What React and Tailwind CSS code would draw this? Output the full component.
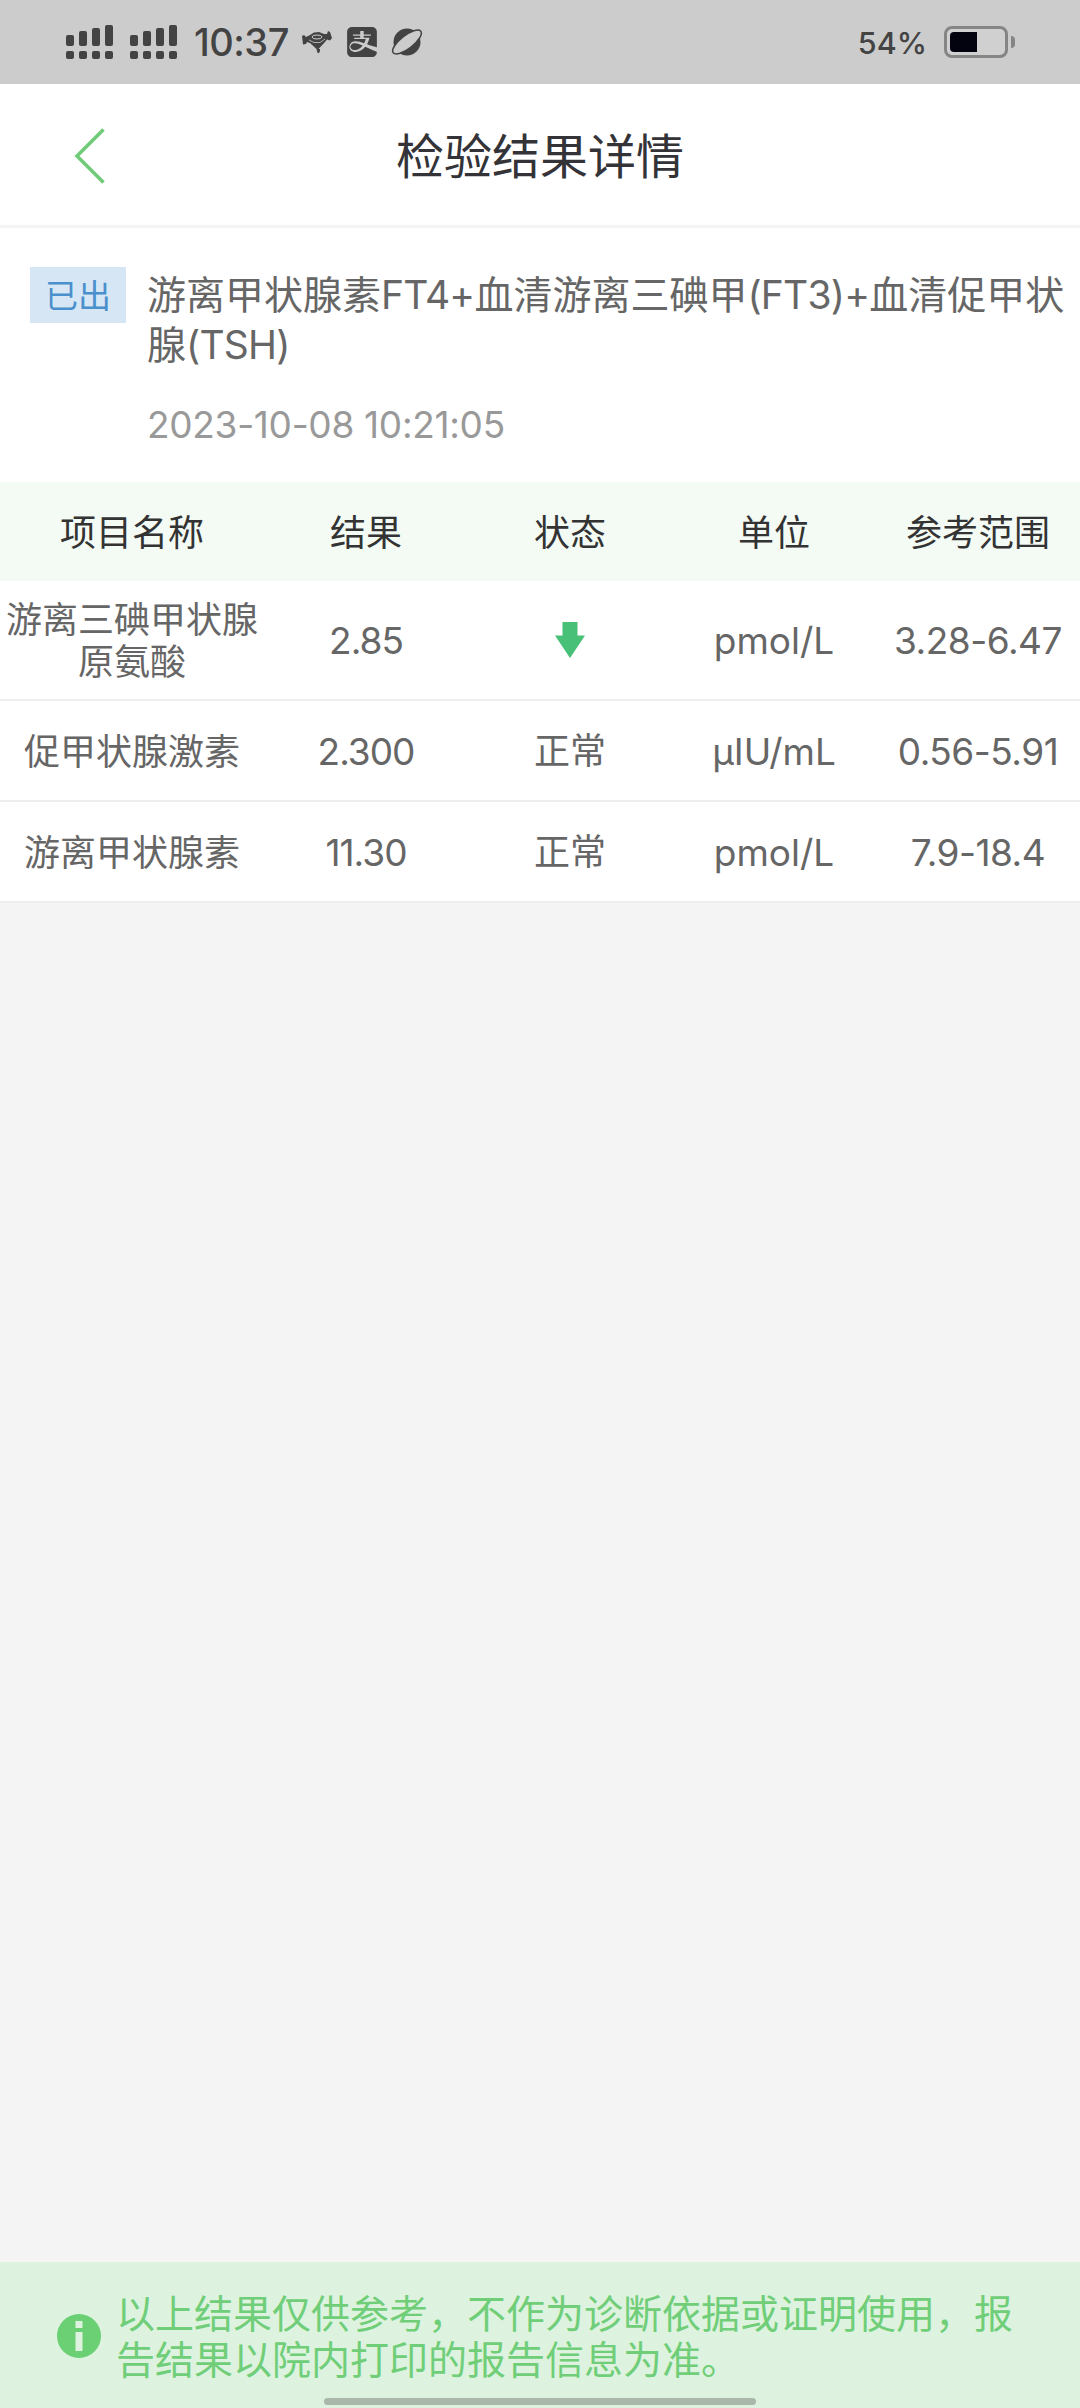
import React from "react";
import { SiAlipay } from "react-icons/si";

const columns = ["项目名称", "结果", "状态", "单位", "参考范围"];

const results = [
  { name: "游离三碘甲状腺原氨酸", value: "2.85", status: "low", unit: "pmol/L", range: "3.28-6.47" },
  { name: "促甲状腺激素", value: "2.300", status: "正常", unit: "μIU/mL", range: "0.56-5.91" },
  { name: "游离甲状腺素", value: "11.30", status: "正常", unit: "pmol/L", range: "7.9-18.4" },
];

const Signal = () => (
  <svg width="47" height="34" viewBox="0 0 47 34" fill="#434343">
    {[10, 6, 3, 0].map((top, i) => (
      <g key={top}>
        <rect x={i * 13} y={top} width="8" height={21 - top} rx="2" />
        <rect x={i * 13} y="26" width="8" height="8" rx="2" />
      </g>
    ))}
  </svg>
);

const StatusBar = () => (
  <div className="h-[84px] shrink-0 bg-[#cccccc] flex items-center justify-between pl-[66px] pr-[65px] text-[#434343]">
    <div className="flex items-center">
      <Signal />
      <div className="ml-[17px]">
        <Signal />
      </div>
      <span className="ml-[17px] w-[108px] text-[38px] leading-none font-medium tracking-[-0.5px]">10:37</span>
      <svg width="30" height="22" viewBox="0 0 30 22" fill="#434343">
        <path d="M0 5 L2 4 L4 6 L8 4 L12 1.500 L17 1 L22 3 L25 3 L26 0 L28 1 L30 7 L28 9.500 L25 8.500 L23 11 L16.500 18 H18 V20 L17 22 H15.500 L14.500 18 L8 12 L5 11 L4 13 L1 13.500 Z" />
        <ellipse cx="15" cy="6" rx="5" ry="2" fill="none" stroke="#cccccc" strokeWidth="1" />
        <path d="M7 9 L12 11.500 L18 11.500 L23 8" fill="none" stroke="#cccccc" strokeWidth="0.8" />
      </svg>
      <SiAlipay className="ml-[15px] size-[30px]" />
      <svg className="ml-[15px] overflow-visible" width="30" height="30" viewBox="0 0 30 30">
        <circle cx="15" cy="15" r="13.5" fill="#434343" />
        <ellipse cx="15" cy="15" rx="17.5" ry="6.500" transform="rotate(-38 15 15)" fill="#cccccc" stroke="#434343" strokeWidth="1.5" />
      </svg>
    </div>
    <div className="flex items-center">
      <span className="mt-0.5 mr-[17px] text-[30.5px] leading-none font-medium">54%</span>
      <div className="w-16 h-8 border-3 border-[#858585] rounded-[8px] bg-[#d0d0d0] p-[3px]">
        <div className="w-[27px] h-full bg-[#02030f] rounded-l-[4px]"></div>
      </div>
      <div className="ml-[3px] w-1 h-3 rounded-r-full bg-[#858585]"></div>
    </div>
  </div>
);

const DownArrow = () => (
  <svg className="mx-auto" width="30" height="36" viewBox="0 0 30 36" fill="#48c078">
    <path d="M7.500 0h15v13.500H30L15 36 0 13.500h7.500z" />
  </svg>
);

const App = () => {
  return (
    <div
      lang="zh-CN"
      className="w-[1080px] h-[2408px] flex flex-col bg-[#f4f4f4] font-['Inter','Noto_Sans_CJK_SC',sans-serif]"
    >
      <StatusBar />

      {/* Header */}
      <header className="h-36 shrink-0 bg-white border-b-3 border-[#f4f4f4] grid grid-cols-[1fr_auto_1fr] items-center">
        <button className="justify-self-start ml-[74px] mt-[3px]">
          <svg width="31" height="56" viewBox="0 0 31 56" fill="none" stroke="#6fcb78" strokeWidth="3.500">
            <path d="M29.500 1.500 L3 28 L29.500 54.500" />
          </svg>
        </button>
        <h1 className="pt-[5px] text-[48px] leading-none text-[#333338]">检验结果详情</h1>
      </header>

      {/* Report summary */}
      <section className="h-[254px] shrink-0 bg-white flex items-start pl-[30px] pt-[39px]">
        <span className="w-24 h-14 pt-1 shrink-0 bg-[#d7e6f4] text-[#4a90cd] text-[33px] flex items-center justify-center">
          已出
        </span>
        <div className="ml-[21px] pt-[3px]">
          <h2 className="text-[39px] leading-[49.5px] text-[#666666] whitespace-nowrap">
            游离甲状腺素<span className="tracking-[-0.8px]">FT4+</span>血清游离三碘甲
            <span className="tracking-[-0.8px]">(FT3)+</span>血清促甲状
            <br />腺<span className="tracking-[-0.8px]">(TSH)</span>
          </h2>
          <p className="mt-[34px] text-[37px] leading-[44px] text-[#999999] tracking-[-0.3px]">2023-10-08 10:21:05</p>
        </div>
      </section>

      {/* Results */}
      <table className="w-full table-fixed border-collapse bg-white text-center text-[36px] leading-[42px] text-[#666666]">
        <thead>
          <tr className="h-[99px] bg-[#f4fbf5] text-[#333333]">
            {columns.map((column, index) => (
              <th key={column} className={index === 0 ? "w-[264px] pt-[3px] font-normal" : "w-[204px] pt-[3px] font-normal"}>
                {column}
              </th>
            ))}
          </tr>
        </thead>
        <tbody>
          {results.map((item) => (
            <tr
              key={item.name}
              className={item.status === "low" ? "h-[119px] border-b-2 border-[#eeeeee]" : "h-[101px] border-b-2 border-[#eeeeee]"}
            >
              <td className="px-1 pt-0.5">{item.name}</td>
              <td className="pt-0.5 text-[37px] tracking-[-1px]">{item.value}</td>
              <td>{item.status === "low" ? <DownArrow /> : item.status}</td>
              <td className="pt-0.5 text-[37px]">{item.unit}</td>
              <td className="pt-0.5 text-[37px] tracking-[-0.5px]">{item.range}</td>
            </tr>
          ))}
        </tbody>
      </table>

      {/* Notice */}
      <footer className="mt-auto h-[146px] shrink-0 bg-[#ddf3df] flex flex-col justify-between items-center pt-[29px] pb-[3px]">
        <div className="w-full flex items-center pl-[57px]">
          <svg className="-mt-0.5" width="44" height="44" viewBox="0 0 44 44">
            <circle cx="22" cy="22" r="22" fill="#6bcf73" />
            <rect x="18.500" y="7" width="7" height="7" fill="#ddf3df" />
            <rect x="18.500" y="18" width="7" height="19" fill="#ddf3df" />
          </svg>
          <p className="ml-[15px] w-[900px] text-[39px] leading-[46px] text-[#70ce79]">
            以上结果仅供参考，不作为诊断依据或证明使用，报告结果以院内打印的报告信息为准。
          </p>
        </div>
        <div className="w-[432px] h-[7px] rounded-full bg-[#a9b8ab]"></div>
      </footer>
    </div>
  );
};

export default App;
